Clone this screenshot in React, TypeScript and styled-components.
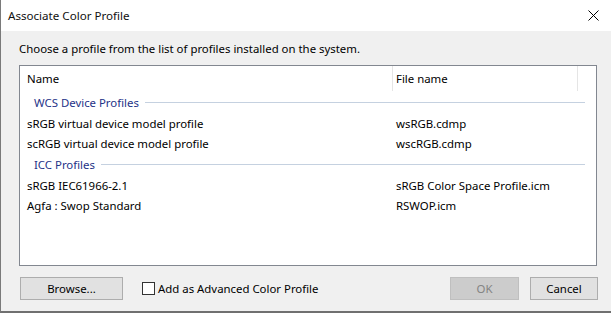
import React, { useState } from 'react';
import styled, { createGlobalStyle, css } from 'styled-components';

const GlobalStyle = createGlobalStyle`
  html, body {
    margin: 0;
    padding: 0;
    background: #ffffff;
  }
  body {
    font-family: "Noto Sans", "Open Sans", sans-serif;
    font-size: 11.4px;
    color: #000000;
  }
`;

const Window = styled.div`
  width: 611px;
  height: 313px;
  box-sizing: border-box;
  display: flex;
  flex-direction: column;
  background: #f0f0f0;
  border-left: 1px solid #7a7a7a;
  border-bottom: 2px solid #707070;
  overflow: hidden;
`;

const TitleBar = styled.div`
  height: 31px;
  flex-shrink: 0;
  display: flex;
  align-items: center;
  justify-content: space-between;
  background: #ffffff;
  padding: 0 8px 0 7px;
`;

const TitleText = styled.span`
  font-size: 11.6px;
  color: #111111;
`;

const CloseButton = styled.button`
  width: 20px;
  height: 20px;
  border: none;
  background: transparent;
  padding: 0;
  display: flex;
  align-items: center;
  justify-content: center;
`;

const Body = styled.div`
  flex: 1;
  display: flex;
  flex-direction: column;
  padding: 10px 14px 0 18px;
`;

const Instruction = styled.div`
  line-height: 16px;
  margin-bottom: 8px;
`;

const ListBox = styled.div`
  height: 201px;
  box-sizing: border-box;
  border: 1px solid #828790;
  background: #ffffff;
  display: flex;
  flex-direction: column;
`;

const HeaderRow = styled.div`
  height: 25px;
  flex-shrink: 0;
  display: flex;
`;

interface HeaderCellProps {
  width: number;
  pad: number;
}

const HeaderCell = styled.div<HeaderCellProps>`
  width: ${(p) => p.width}px;
  box-sizing: border-box;
  padding-left: ${(p) => p.pad}px;
  display: flex;
  align-items: center;
  border-right: 1px solid #e5e5e5;
`;

const GroupRow = styled.div`
  height: 22px;
  display: flex;
  align-items: center;
  padding: 0 11px 0 14px;
  color: #1e3287;
`;

const GroupLine = styled.div`
  flex: 1;
  height: 1px;
  margin-left: 6px;
  background: #c5d1e0;
`;

const Row = styled.div`
  height: 20px;
  display: flex;
  align-items: center;
`;

const NameCell = styled.div`
  width: 376px;
  box-sizing: border-box;
  padding-left: 7px;
`;

const FileCell = styled.div`
  flex: 1;
`;

const Footer = styled.div`
  display: flex;
  align-items: center;
  margin-top: 11px;
  padding-left: 1px;
`;

interface ButtonProps {
  width: number;
  disabled?: boolean;
}

const DialogButton = styled.button<ButtonProps>`
  width: ${(p) => p.width}px;
  height: 23px;
  box-sizing: border-box;
  border: 1px solid #adadad;
  background: #e1e1e1;
  font-family: inherit;
  font-size: 11.4px;
  color: #000000;
  padding: 0;

  ${(p) =>
    p.disabled &&
    css`
      background: #cccccc;
      border-color: #bfbfbf;
      color: #838383;
    `}
`;

const CheckLabel = styled.label`
  display: flex;
  align-items: center;
  margin-left: 19px;
  flex: 1;
`;

const CheckBox = styled.span<{ checked: boolean }>`
  width: 13px;
  height: 13px;
  box-sizing: border-box;
  border: 1px solid #333333;
  background: #ffffff;
  margin-right: 3px;
  display: flex;
  align-items: center;
  justify-content: center;
`;

const ButtonGroup = styled.div`
  display: flex;
  gap: 11px;
  margin-right: -1px;
`;

const wcsProfiles = [
  { name: 'sRGB virtual device model profile', file: 'wsRGB.cdmp' },
  { name: 'scRGB virtual device model profile', file: 'wscRGB.cdmp' },
];

const iccProfiles = [
  { name: 'sRGB IEC61966-2.1', file: 'sRGB Color Space Profile.icm' },
  { name: 'Agfa : Swop Standard', file: 'RSWOP.icm' },
];

const App: React.FC = () => {
  const [advanced, setAdvanced] = useState(false);

  return (
    <>
      <GlobalStyle />
      <Window>
        <TitleBar>
          <TitleText>Associate Color Profile</TitleText>
          <CloseButton aria-label="Close">
            <svg width="11" height="11" viewBox="0 0 11 11">
              <path d="M0.5 0.5 L10.5 10.5 M10.5 0.5 L0.5 10.5" stroke="#000" strokeWidth="1" />
            </svg>
          </CloseButton>
        </TitleBar>
        <Body>
          <Instruction>Choose a profile from the list of profiles installed on the system.</Instruction>
          <ListBox>
            <HeaderRow>
              <HeaderCell width={373} pad={7}>
                Name
              </HeaderCell>
              <HeaderCell width={185} pad={3}>
                File name
              </HeaderCell>
            </HeaderRow>
            <GroupRow>
              WCS Device Profiles
              <GroupLine />
            </GroupRow>
            {wcsProfiles.map((p) => (
              <Row key={p.file}>
                <NameCell>{p.name}</NameCell>
                <FileCell>{p.file}</FileCell>
              </Row>
            ))}
            <GroupRow>
              ICC Profiles
              <GroupLine />
            </GroupRow>
            {iccProfiles.map((p) => (
              <Row key={p.file}>
                <NameCell>{p.name}</NameCell>
                <FileCell>{p.file}</FileCell>
              </Row>
            ))}
          </ListBox>
          <Footer>
            <DialogButton width={103}>Browse...</DialogButton>
            <CheckLabel onClick={() => setAdvanced(!advanced)}>
              <CheckBox checked={advanced}>
                {advanced && (
                  <svg width="9" height="9" viewBox="0 0 9 9">
                    <path d="M1 4.5 L3.5 7 L8 1.5" stroke="#000" strokeWidth="1.4" fill="none" />
                  </svg>
                )}
              </CheckBox>
              Add as Advanced Color Profile
            </CheckLabel>
            <ButtonGroup>
              <DialogButton width={69} disabled>
                OK
              </DialogButton>
              <DialogButton width={68}>Cancel</DialogButton>
            </ButtonGroup>
          </Footer>
        </Body>
      </Window>
    </>
  );
};

export default App;
